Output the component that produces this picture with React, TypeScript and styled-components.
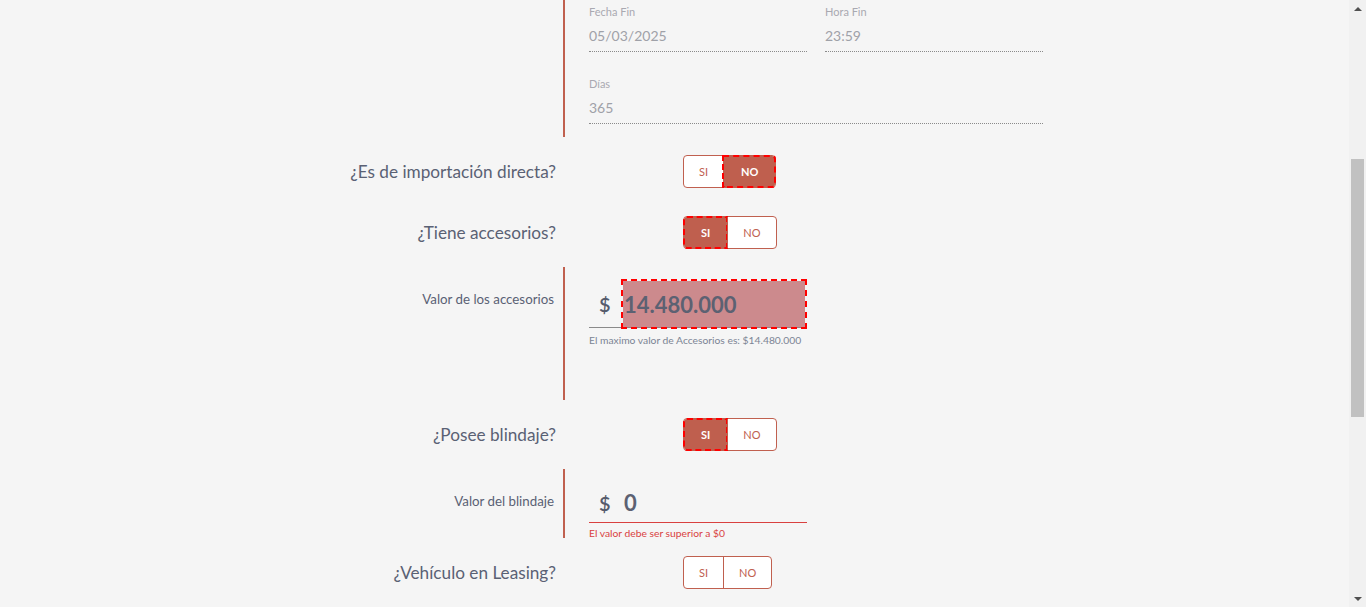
import * as React from 'react';
import styled, { createGlobalStyle } from 'styled-components';

const GlobalStyle = createGlobalStyle`
	html, body {
		margin: 0;
		padding: 0;
		background: #f5f5f5;
	}
	body {
		font-family: 'Lato', 'Liberation Sans', sans-serif;
		color: #5a6174;
	}
`;

const Page = styled.div`
	display: flex;
	height: 100vh;
	overflow: hidden;
`;

const Form = styled.form`
	flex: 1;
	display: flex;
	flex-direction: column;
`;

const ScrollTrack = styled.div`
	width: 17px;
	flex-shrink: 0;
	display: flex;
	flex-direction: column;
	align-items: center;
	background: #f1f1f1;
`;

const ScrollArrow = styled.div<{ $down?: boolean }>`
	height: 17px;
	display: flex;
	align-items: center;
	justify-content: center;
	&::before {
		content: '';
		border-left: 4px solid transparent;
		border-right: 4px solid transparent;
		${(p) => (p.$down ? 'border-top: 4px solid #505050;' : 'border-bottom: 4px solid #505050;')}
	}
`;

const ScrollSpace = styled.div<{ $grow: number }>`
	flex: ${(p) => p.$grow};
`;

const ScrollThumb = styled.div`
	width: 13px;
	height: 258px;
	flex-shrink: 0;
	background: #c1c1c1;
`;

const QuestionRow = styled.div`
	display: grid;
	grid-template-columns: 556px auto;
	column-gap: 127px;
	align-items: center;
	padding: 14px 0;
`;

const QuestionLabel = styled.label`
	text-align: right;
	font-size: 17.2px;
	color: #5a6174;
`;

const Toggle = styled.div`
	display: inline-flex;
	justify-self: start;
	height: 33px;
	box-sizing: border-box;
	border: 1px solid #c0604f;
	border-radius: 4px;
	background: #fff;
`;

const ToggleButton = styled.button<{ $active?: boolean }>`
	border: none;
	margin: 0;
	padding: 0 ${(p) => (p.$active ? 17 : 15)}px;
	font-family: inherit;
	font-size: 11px;
	font-weight: ${(p) => (p.$active ? 700 : 400)};
	color: ${(p) => (p.$active ? '#fff' : '#c0604f')};
	background: ${(p) => (p.$active ? '#bf5f4e' : 'transparent')};
	outline: ${(p) => (p.$active ? '2px dashed #ff0000' : 'none')};
	outline-offset: -1px;
	cursor: pointer;
	&:first-child {
		border-radius: 3px 0 0 3px;
	}
	&:last-child {
		border-radius: 0 3px 3px 0;
	}
	& + & {
		border-left: 1px solid ${(p) => (p.$active ? '#bf5f4e' : '#ececec')};
	}
`;

const Nested = styled.div`
	display: grid;
	grid-template-columns: 563px 1fr;
	margin: 4px 0;
	&:first-child {
		margin-top: 0;
	}
`;

const NestedLabel = styled.div`
	text-align: right;
	padding: 24px 9px 0 0;
	font-size: 13.3px;
	color: #5a6174;
`;

const NestedBody = styled.div`
	width: 454px;
	border-left: 2px solid #c0604f;
	padding: 5px 0 13px 24px;
`;

const MoneyBody = styled.div<{ $minHeight?: number }>`
	width: 454px;
	border-left: 2px solid #c0604f;
	padding: 14px 0 0 24px;
	min-height: ${(p) => p.$minHeight || 0}px;
`;

const FieldGrid = styled.div`
	display: grid;
	grid-template-columns: 218px 218px;
	column-gap: 18px;
	row-gap: 25px;
`;

const Field = styled.div<{ $wide?: boolean }>`
	display: flex;
	flex-direction: column;
	grid-column: ${(p) => (p.$wide ? '1 / -1' : 'auto')};
`;

const FieldLabel = styled.span`
	font-size: 11px;
	line-height: 14px;
	color: #a9a9b1;
`;

const FieldValue = styled.div`
	font-size: 14px;
	line-height: 16px;
	padding: 9px 0 7px;
	color: #9fa1a8;
	border-bottom: 1px dotted #8a8a8a;
`;

const MoneyRow = styled.div<{ $error?: boolean; $compact?: boolean }>`
	display: flex;
	align-items: stretch;
	width: 218px;
	height: ${(p) => (p.$compact ? 39 : 46)}px;
	border-bottom: 1px solid ${(p) => (p.$error ? '#d9413f' : '#8a8a8a')};
`;

const Currency = styled.span`
	display: flex;
	align-items: center;
	width: 34px;
	padding-left: 10px;
	box-sizing: border-box;
	font-size: 20px;
	font-weight: 600;
	color: #555b6c;
`;

const Amount = styled.div<{ $focused?: boolean }>`
	flex: 1;
	display: flex;
	align-items: center;
	margin-right: 2px;
	padding-left: 1px;
	font-size: 22px;
	font-weight: 700;
	color: #5c6172;
	background: ${(p) => (p.$focused ? '#cc8a8d' : 'transparent')};
	outline: ${(p) => (p.$focused ? '2px dashed #ff0000' : 'none')};
`;

const Helper = styled.div<{ $error?: boolean }>`
	margin-top: ${(p) => (p.$error ? 5 : 6)}px;
	font-size: 10.3px;
	line-height: ${(p) => (p.$error ? 10 : 13)}px;
	color: ${(p) => (p.$error ? '#d9413f' : '#7b8494')};
`;

type YesNo = 'si' | 'no' | null;

const YesNoToggle = ({ value }: { value: YesNo }) => (
	<Toggle>
		<ToggleButton type="button" $active={value === 'si'}>
			SI
		</ToggleButton>
		<ToggleButton type="button" $active={value === 'no'}>
			NO
		</ToggleButton>
	</Toggle>
);

const Question = ({ label, value }: { label: string; value: YesNo }) => (
	<QuestionRow>
		<QuestionLabel>{label}</QuestionLabel>
		<YesNoToggle value={value} />
	</QuestionRow>
);

const App: React.FunctionComponent = () => {
	return (
		<>
			<GlobalStyle />
			<Page>
				<Form onSubmit={(e) => e.preventDefault()}>
					<Nested>
						<div />
						<NestedBody>
							<FieldGrid>
								<Field>
									<FieldLabel>Fecha Fin</FieldLabel>
									<FieldValue>05/03/2025</FieldValue>
								</Field>
								<Field>
									<FieldLabel>Hora Fin</FieldLabel>
									<FieldValue>23:59</FieldValue>
								</Field>
								<Field $wide>
									<FieldLabel>Días</FieldLabel>
									<FieldValue>365</FieldValue>
								</Field>
							</FieldGrid>
						</NestedBody>
					</Nested>

					<Question label="¿Es de importación directa?" value="no" />
					<Question label="¿Tiene accesorios?" value="si" />
					<Nested>
						<NestedLabel>Valor de los accesorios</NestedLabel>
						<MoneyBody $minHeight={119}>
							<MoneyRow>
								<Currency>$</Currency>
								<Amount $focused>14.480.000</Amount>
							</MoneyRow>
							<Helper>El maximo valor de Accesorios es: $14.480.000</Helper>
						</MoneyBody>
					</Nested>

					<Question label="¿Posee blindaje?" value="si" />
					<Nested>
						<NestedLabel>Valor del blindaje</NestedLabel>
						<MoneyBody>
							<MoneyRow $error $compact>
								<Currency>$</Currency>
								<Amount>0</Amount>
							</MoneyRow>
							<Helper $error>El valor debe ser superior a $0</Helper>
						</MoneyBody>
					</Nested>

					<Question label="¿Vehículo en Leasing?" value={null} />
				</Form>
				<ScrollTrack>
					<ScrollArrow />
					<ScrollSpace $grow={142} />
					<ScrollThumb />
					<ScrollSpace $grow={173} />
					<ScrollArrow $down />
				</ScrollTrack>
			</Page>
		</>
	);
};

export default App;
